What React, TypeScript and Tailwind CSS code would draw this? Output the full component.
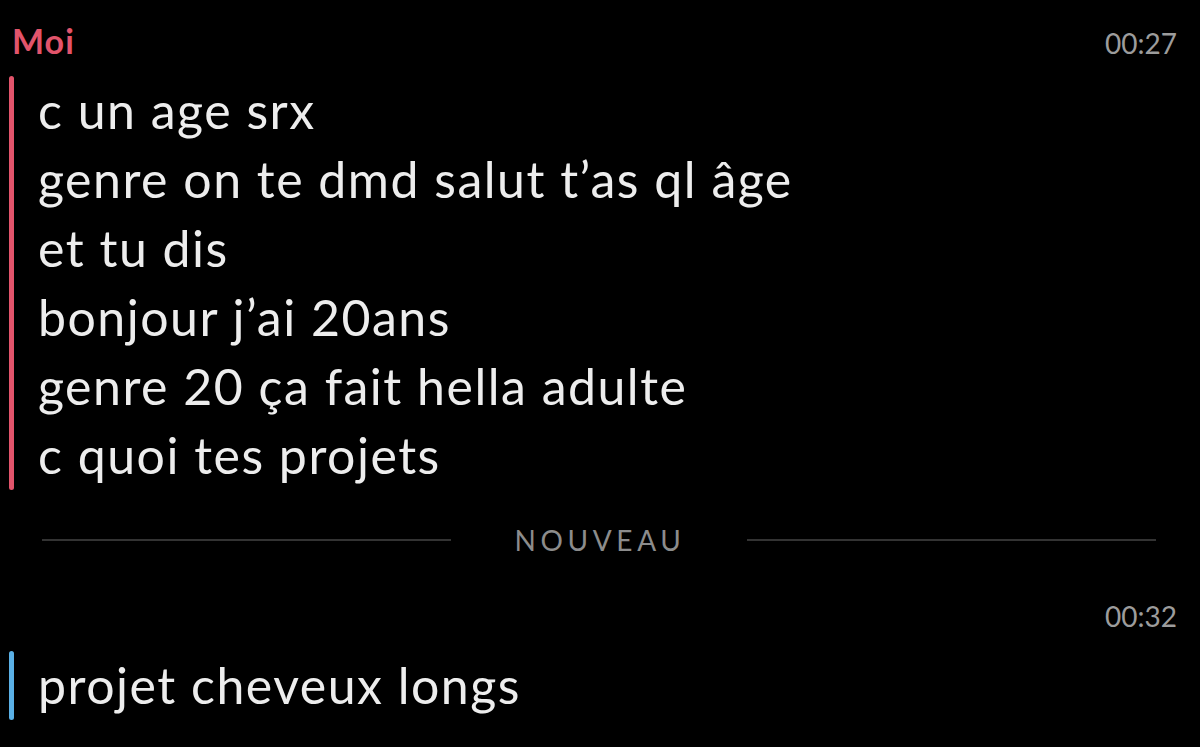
import React from 'react'

const moiLines = [
  'c un age srx',
  'genre on te dmd salut t\u2019as ql \u00e2ge',
  'et tu dis',
  'bonjour j\u2019ai 20ans',
  'genre 20 \u00e7a fait hella adulte',
  'c quoi tes projets',
]

function MessageBlock({ lines, barColor }: { lines: string[]; barColor: string }) {
  return (
    <div className="flex">
      <div className={`w-[5px] shrink-0 rounded-full ${barColor}`} />
      <div className="pl-[24px] flex flex-col">
        {lines.map((line) => (
          <div key={line} className="text-[50px] leading-[69px] tracking-[0.03em] text-[#ededed] whitespace-nowrap">
            {line}
          </div>
        ))}
      </div>
    </div>
  )
}

export default function App() {
  return (
    <div className="w-[1200px] h-[747px] bg-black overflow-hidden font-['Lato',sans-serif] pl-[9px] pr-[23px]">
      {/* Moi header */}
      <div className="flex items-baseline justify-between pt-[21px] pl-[3px]">
        <span className="text-[34px] leading-[40px] font-bold tracking-[0.03em] text-[#e2546b]">Moi</span>
        <span className="text-[28px] leading-[36px] text-[#9c9c9c]">00:27</span>
      </div>

      <div className="mt-[15px]">
        <MessageBlock lines={moiLines} barColor="bg-[#e2546b]" />
      </div>

      {/* divider */}
      <div className="flex items-center mt-[30px] pl-[33px] pr-[21px] h-[40px]">
        <div className="flex-1 h-[2px] bg-[#333333]" />
        <span className="pl-[64px] pr-[62px] text-[28px] tracking-[0.165em] text-[#8c8c8c]">NOUVEAU</span>
        <div className="flex-1 h-[2px] bg-[#333333]" />
      </div>

      <div className="flex justify-end mt-[38px]">
        <span className="text-[28px] leading-[36px] text-[#9c9c9c]">00:32</span>
      </div>

      <div className="mt-[17px]">
        <MessageBlock lines={['projet cheveux longs']} barColor="bg-[#5ab0e6]" />
      </div>
    </div>
  )
}
